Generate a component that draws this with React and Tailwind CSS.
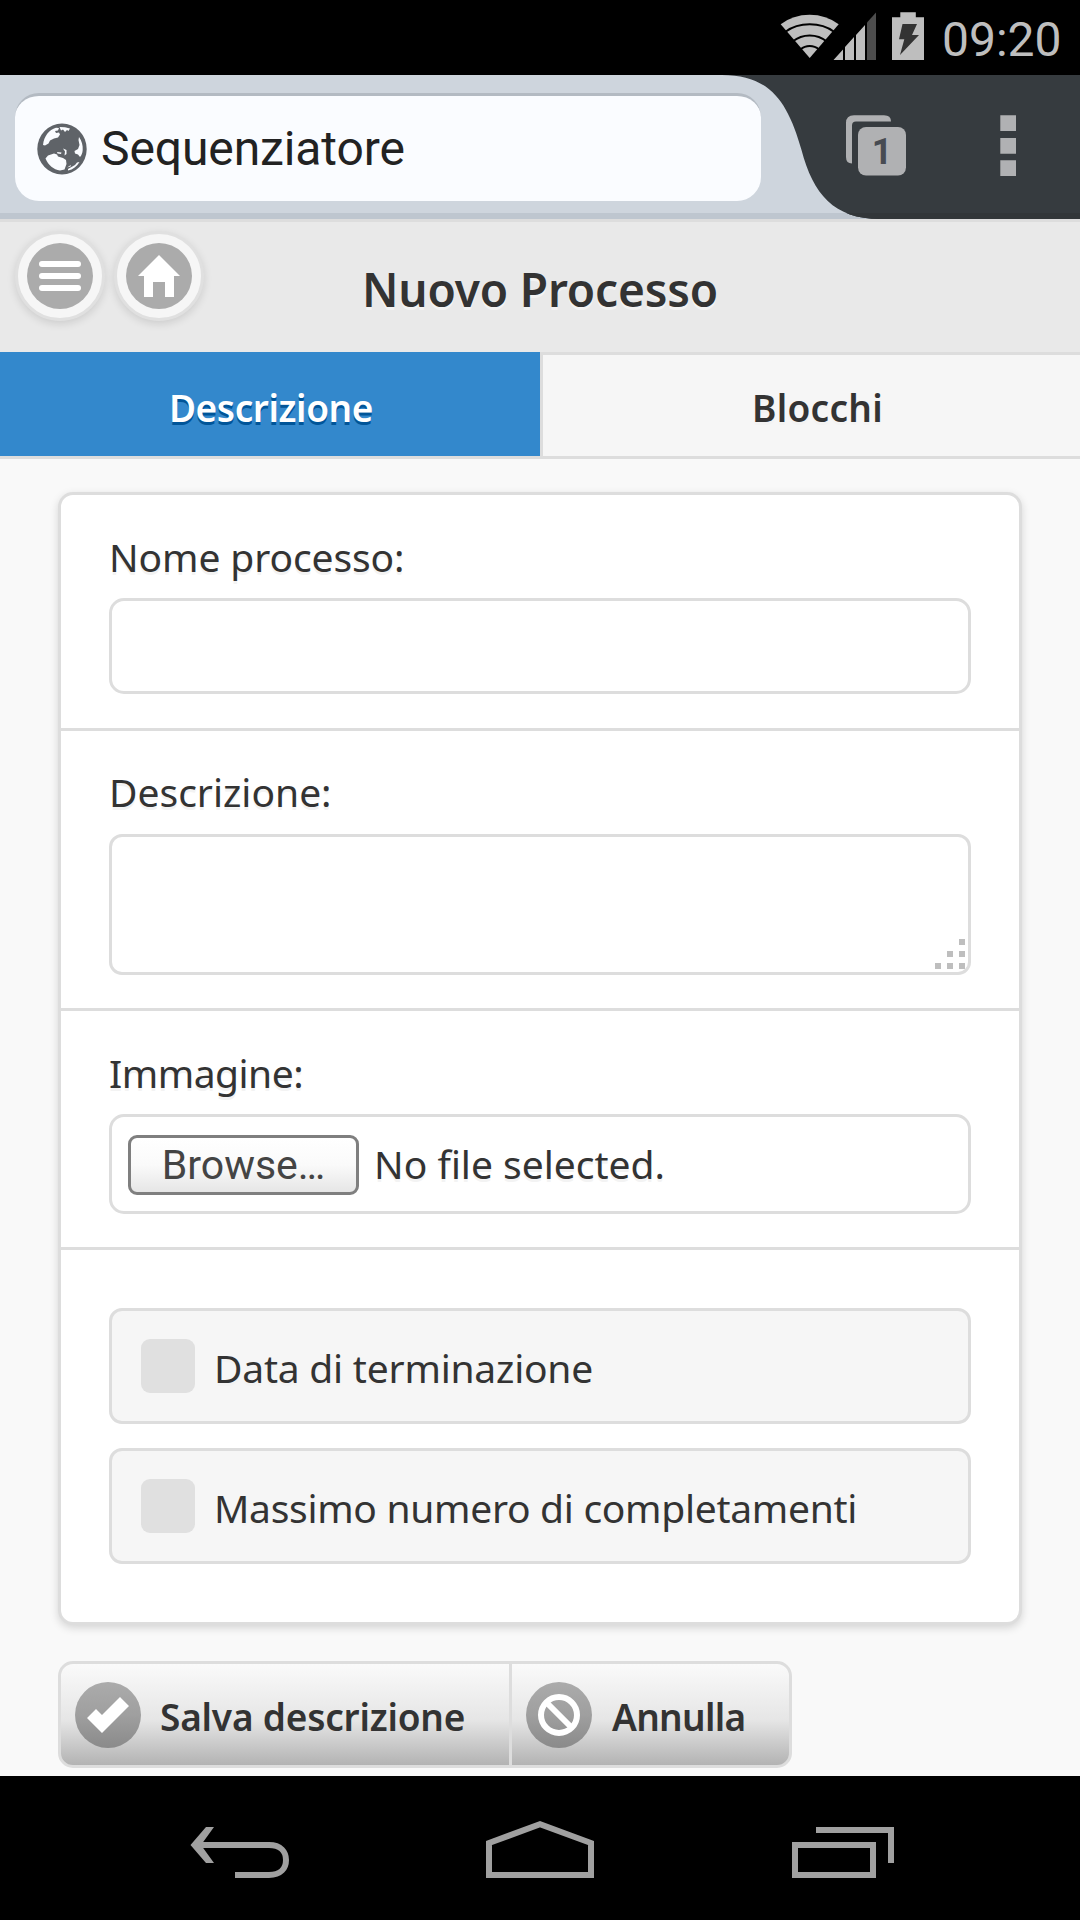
import React from "react";

function StatusBar() {
  return (
    <div className="flex h-[75px] items-center bg-black pl-[780px]">
      <svg width="156" height="75" viewBox="780 0 156 75" fill="#bebebe">
        <path d="M809.7 58 L780.7 24.3 Q793 14.8 809.7 14.8 Q826 14.8 838.7 24.3 Z" />
        <g fill="none" stroke="#000" strokeWidth="2">
          <path d="M785.5 31.8 Q795.5 24.3 809.7 24.3 Q824 24.3 834 31.8" />
          <path d="M793 41.2 Q800 35.4 809.7 35.4 Q819.5 35.4 826.5 41.2" />
          <path d="M800.5 49.5 Q804.5 46 809.7 46 Q815 46 819 49.5" />
        </g>
        <path d="M833.5 60 L843 49.4 V60 Z M845 47.1 L854 37.1 V60 H845 Z M856 34.9 L865 24.9 V60 H856 Z" />
        <path d="M867 22.6 L876 12.5 V60 H867 Z" fill="#4d4d4d" />
        <path d="M892 17.3 H900.3 V12.3 H915.8 V17.3 H924 V60 H892 Z" />
        <path d="M902.5 24 H917 L912 35 H919 L900 55 L904.3 39.3 H899 Z" fill="#333" />
      </svg>
      <span className="ml-[6px] mt-[4px] font-['Roboto',sans-serif] text-[48px] leading-[60px] text-[#bebebe]">09:20</span>
    </div>
  );
}

function Globe() {
  return (
    <svg width="50" height="52" viewBox="0 0 50 52" className="shrink-0">
      <ellipse cx="25" cy="26" rx="24.7" ry="25.5" fill="#5f6368" />
      <g fill="#fafcff">
        <path d="M6 22 C7 13 12 7 19 4.8 L22 5 L21 7.5 L18 8 L19 10 L22 9.5 L23 11.5 L21 14.5 L17 15.5 L13 17.5 L11.5 20.5 L8 22.5 Z" />
        <path d="M22.5 4 L28 4.2 L33 5.5 L31.5 8 L30 7 L28 9 L26 6.5 L24 7.5 Z" />
        <path d="M42 14 C44.8 18 46 22 45.7 27 C45.5 30 44.5 32.5 43 34 L41 31.5 L38 30.5 L37.5 28 L41 26 L42.5 22 L41.5 17 Z" />
        <path d="M8.5 35.5 L11 32.5 L17 30.5 L20 31.5 L21 33.5 L26 35 L29 37 L29.5 41 L27.5 46.500 L23 47.5 C16.5 46.5 11.5 42.5 8.5 35.5 Z" />
        <path d="M20 29 L24.5 29.5 L24 31 L20.5 30.5 Z M26 25.5 L29.5 27 L29.5 31 L27.5 32.5 L28 28.5 Z" />
        <path d="M31 46 L38 42 L40 39.5 L42.5 39 C40 43.5 36 46.5 31 47.5 Z M30 44.5 L34 42 L33.5 43.5 Z" />
      </g>
    </svg>
  );
}

function BrowserBar() {
  return (
    <div className="flex h-[144px] border-b-[6px] border-[#bec6cf] bg-[#ced5dd]">
      <div className="ml-[15px] mt-[18px] flex h-[108px] w-[746px] shrink-0 items-center rounded-[24px] border-t-[3px] border-[#b3bac2] bg-[#fafcff] pl-[22px]">
        <Globe />
        <span className="ml-[14px] mt-px font-['Roboto',sans-serif] text-[48px] leading-[60px] tracking-[-0.1px] text-[#222]">Sequenziatore</span>
      </div>
      <svg width="361" height="144" viewBox="719 75 361 144" className="-ml-[42px] shrink-0">
        <clipPath id="bar">
          <path d="M722 75 C771 75 788 103 801.5 150 C813 194 834 219 880 219 H1080 V75 Z" />
        </clipPath>
        <g clipPath="url(#bar)">
          <rect x="719" y="75" width="361" height="144" fill="#363b3f" />
          <rect x="719" y="213" width="361" height="6" fill="#323639" />
        </g>
        <path d="M852 163.500 Q846 163.500 846 157 V123 Q846 115.300 854 115.300 H884 Q891 115.300 891 121.500 H856 Q852 121.500 852 125.500 Z" fill="#b0b1b3" />
        <rect x="858" y="127" width="48" height="48.500" rx="8" fill="#b0b1b3" />
        <text x="882" y="164" textAnchor="middle" className="font-['Roboto',sans-serif] text-[36px] font-bold" fill="#474b52">1</text>
        <path d="M1000.300 115.300 h15.700 v15.700 h-15.700 Z m0 22.700 h15.700 v15.700 h-15.700 Z m0 22.300 h15.700 v15.700 h-15.700 Z" fill="#b0b1b3" />
      </svg>
    </div>
  );
}

function RoundButton({ children }) {
  return (
    <button className="flex size-[90px] items-center justify-center rounded-full border-[3px] border-[#e0e0e0] bg-[#f6f6f6] shadow-[0_3px_9px_rgba(0,0,0,0.12)]">
      <svg width="66" height="66" viewBox="0 0 66 66">
        <circle cx="33" cy="33" r="33" fill="#ababab" />
        {children}
      </svg>
    </button>
  );
}

function PageHeader() {
  return (
    <header className="flex h-[133px] border-t-[3px] border-[#ddd] bg-[#e9e9e9]">
      <div className="flex w-[204px] gap-[9px] pl-[15px] pt-[9px]">
        <RoundButton>
          <g fill="#fff">
            <rect x="12" y="18" width="42" height="6" rx="3" />
            <rect x="12" y="30" width="42" height="6" rx="3" />
            <rect x="12" y="42" width="42" height="6" rx="3" />
          </g>
        </RoundButton>
        <RoundButton>
          <path d="M33 12 L54 33 H48 V54 H39 V39 H27 V54 H18 V33 H12 Z" fill="#fff" />
        </RoundButton>
      </div>
      <h1 className="mt-[37px] grow pr-[204px] text-center text-[46px] leading-[60px] font-semibold tracking-[-0.15px] text-[#333] [text-shadow:0_3px_0_#f3f3f3]">
        Nuovo Processo
      </h1>
    </header>
  );
}

function Tabs() {
  return (
    <nav className="grid h-[107px] grid-cols-2 border-b-[3px] border-[#ddd] text-center text-[37px] leading-[60px] font-semibold text-[#333]">
      <a className="bg-[#3388cc] pt-[26px] pl-[2px] tracking-[-0.4px] text-white [text-shadow:0_3px_0_#005599]">Descrizione</a>
      <a className="border-t-[3px] border-l-[3px] border-[#ddd] bg-[#f6f6f6] pt-[23px] pl-[12px] tracking-[0.3px] [text-shadow:0_3px_0_#f3f3f3]">Blocchi</a>
    </nav>
  );
}

function ResizeGrip() {
  return (
    <svg width="33" height="33" viewBox="0 0 33 33" fill="#bebebe">
      <path d="M24 0 h6 v6 h-6 Z M12 12 h6 v6 h-6 Z M24 12 h6 v6 h-6 Z M0 24 h6 v6 h-6 Z M12 24 h6 v6 h-6 Z M24 24 h6 v6 h-6 Z" />
    </svg>
  );
}

function CheckRow({ label, className }) {
  return (
    <label className="flex h-[116px] items-start rounded-[13px] border-[3px] border-[#ddd] bg-[#f6f6f6] pl-[29px]">
      <span className="mt-[28px] size-[54px] shrink-0 rounded-[9px] bg-[#e0e0e0]" />
      <span className={"ml-[19px] mt-[33px] whitespace-nowrap leading-[48px] [text-shadow:0_3px_0_#f3f3f3] " + className}>{label}</span>
    </label>
  );
}

function Form() {
  return (
    <form className="flex h-[1133px] flex-col rounded-[15px] border-[3px] border-[#ddd] bg-white text-[39px] text-[#333] shadow-[0_3px_9px_rgba(0,0,0,0.15)]">
      <div className="h-[236px] border-b-[3px] border-[#ddd] px-[48px] pt-[38px]">
        <div className="h-[65px] leading-[48px] tracking-[-0.1px] [text-shadow:0_3px_0_#f3f3f3]">Nome processo:</div>
        <div className="h-[96px] rounded-[15px] border-[3px] border-[#ddd]" />
      </div>
      <div className="h-[280px] border-b-[3px] border-[#ddd] px-[48px] pt-[37px]">
        <div className="h-[66px] leading-[48px] [text-shadow:0_3px_0_#f3f3f3]">Descrizione:</div>
        <div className="flex h-[141px] items-end justify-end rounded-[13px] border-[3px] border-[#ddd]">
          <ResizeGrip />
        </div>
      </div>
      <div className="h-[239px] border-b-[3px] border-[#ddd] px-[48px] pt-[38px]">
        <div className="h-[65px] leading-[48px] tracking-[-0.5px] [text-shadow:0_3px_0_#f3f3f3]">Immagine:</div>
        <div className="flex h-[100px] items-start rounded-[15px] border-[3px] border-[#ddd] pt-[18px] pl-[16px]">
          <button type="button" className="h-[60px] w-[231px] rounded-[9px] border-[3px] border-[#7f7f7f] bg-linear-to-b from-white via-[#fafafa] to-[#e6e6e6] pb-[1px] font-['Roboto',sans-serif] text-[41px] leading-[50px] text-[#444]">
            Browse…
          </button>
          <span className="ml-[15px] mt-[5px] leading-[48px] [text-shadow:0_3px_0_#f3f3f3]">No file selected.</span>
        </div>
      </div>
      <div className="flex flex-col gap-[24px] px-[48px] pt-[58px]">
        <CheckRow label="Data di terminazione" className="tracking-[-0.22px]" />
        <CheckRow label="Massimo numero di completamenti" className="tracking-[-0.3px]" />
      </div>
    </form>
  );
}

function Actions() {
  return (
    <div className="mt-[36px] flex h-[107px] w-[734px] rounded-[15px] border-[3px] border-[#ddd] bg-linear-to-b from-[#fafafa] via-[#e6e6e6] via-55% to-[#b3b3b3] text-[37px] leading-[60px] font-semibold text-[#333] [text-shadow:0_3px_0_#f3f3f3]">
      <button className="flex w-[451px] items-start border-r-[3px] border-[#ddd] pt-[18px] pl-[14px]">
        <svg width="66" height="66" viewBox="0 0 66 66" className="shrink-0">
          <defs>
            <linearGradient id="disc" x1="0" y1="0" x2="0" y2="1">
              <stop offset="0" stopColor="#ababab" />
              <stop offset="0.5" stopColor="#9f9f9f" />
              <stop offset="1" stopColor="#8a8a8a" />
            </linearGradient>
          </defs>
          <circle cx="33" cy="33" r="33" fill="url(#disc)" />
          <path d="M12 36 L21 27 L27 33 L45 15 L54 24 L27 51 Z" fill="#fff" />
        </svg>
        <span className="ml-[19px] mt-[5px] tracking-[-0.2px]">Salva descrizione</span>
      </button>
      <button className="flex items-start pt-[18px] pl-[14px]">
        <svg width="66" height="66" viewBox="0 0 66 66" className="shrink-0">
          <circle cx="33" cy="33" r="33" fill="url(#disc)" />
          <circle cx="33" cy="33" r="18" fill="none" stroke="#fff" strokeWidth="6" />
          <path d="M21 21 L45 45" stroke="#fff" strokeWidth="6" />
        </svg>
        <span className="ml-[20px] mt-[5px] tracking-[-0.7px]">Annulla</span>
      </button>
    </div>
  );
}

function NavBar() {
  return (
    <div className="flex h-[144px] items-center bg-black pl-[186px]">
      <svg width="714" height="144" viewBox="186 1776 714 144" fill="none" stroke="#a0a0a0" strokeWidth="6">
        <path d="M196 1845 H269 C281 1845 286 1852 286 1860 C286 1868 281 1875 269 1875 H235" />
        <path d="M206 1827 H214 L201 1845 L214 1863 H206 L190.500 1845 Z" fill="#a0a0a0" stroke="none" />
        <path d="M489 1843 L540 1824.200 L591 1843 V1875 H489 Z" />
        <path d="M795 1845 H873 V1875 H795 Z M816 1830 H891 V1863" />
      </svg>
    </div>
  );
}

export default function App() {
  return (
    <div className="flex h-[1920px] w-[1080px] flex-col overflow-hidden bg-[#f9f9f9] font-['Noto_Sans','Open_Sans',sans-serif]">
      <StatusBar />
      <BrowserBar />
      <PageHeader />
      <Tabs />
      <main className="h-[1317px] px-[58px] pt-[33px]">
        <Form />
        <Actions />
      </main>
      <NavBar />
    </div>
  );
}
